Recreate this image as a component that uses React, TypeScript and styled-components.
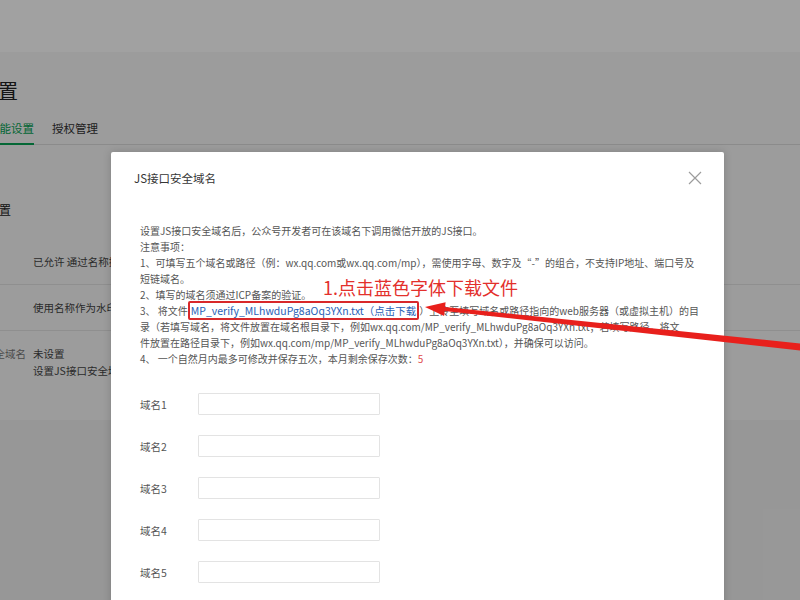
import styled, { createGlobalStyle } from "styled-components";

const GlobalStyle = createGlobalStyle`
  html, body {
    margin: 0;
    padding: 0;
  }
  body {
    font-family: "Noto Sans CJK SC", "Noto Sans", sans-serif;
    color: #333;
  }
`;

const Page = styled.div`
  position: relative;
  width: 800px;
  height: 600px;
  overflow: hidden;
  background: #f0f0f0;
`;

const Header = styled.div`
  height: 52px;
  background: #fff;
`;

const Main = styled.div`
  background: #f7f7f7;
  height: 368px;
`;

const Shifted = styled.div`
  margin-left: -82px;
`;

const PageTitle = styled.h1`
  margin: 0;
  padding-top: 25px;
  font-size: 20px;
  line-height: 28px;
  font-weight: 400;
  color: #222;
`;

const Tabs = styled.div`
  display: flex;
  gap: 18px;
  margin-top: 15px;
  padding-left: 6px;
  border-bottom: 1px solid #dcdcdc;
`;

const Tab = styled.div<{ $active?: boolean }>`
  font-size: 11.5px;
  line-height: 16px;
  padding-bottom: 7px;
  color: ${({ $active }) => ($active ? "#07a355" : "#333")};
  border-bottom: 2px solid
    ${({ $active }) => ($active ? "#07a355" : "transparent")};
  margin-bottom: -1px;
`;

const Card = styled.div`
  padding-left: 33px;
`;

const SectionTitle = styled.h2`
  margin: 57px 0 21px 12px;
  font-size: 12px;
  line-height: 16px;
  font-weight: 400;
  color: #222;
`;

const Row = styled.div<{ $last?: boolean }>`
  display: flex;
  padding: 14px 0;
  border-bottom: ${({ $last }) => ($last ? "none" : "1px solid #e2e2e2")};
  font-size: 10.5px;
  line-height: 17px;
  color: #444;
`;

const RowLabel = styled.div`
  width: 82px;
  flex-shrink: 0;
  color: #777;
`;

const RowValue = styled.div`
  white-space: nowrap;
`;

const Mask = styled.div`
  position: absolute;
  inset: 0;
  background: rgba(0, 0, 0, 0.37);
`;

const Dialog = styled.div`
  position: absolute;
  left: 111px;
  top: 152px;
  width: 613px;
  height: 470px;
  background: #fff;
  border-radius: 2px;
  box-shadow: 0 0 8px rgba(0, 0, 0, 0.18);
`;

const DialogHeader = styled.div`
  display: flex;
  align-items: center;
  justify-content: space-between;
  height: 52px;
  padding: 0 22px 0 23px;
`;

const DialogTitle = styled.h3`
  margin: 0;
  font-size: 11.5px;
  font-weight: 400;
  color: #353535;
`;

const CloseButton = styled.button`
  display: flex;
  padding: 0;
  border: none;
  background: none;
  cursor: pointer;
`;

const DialogBody = styled.div`
  padding: 19px 29px 0;
`;

const Notes = styled.div`
  font-size: 10px;
  line-height: 16px;
  color: #555;
  white-space: nowrap;
`;

const Note = styled.p`
  margin: 0;
`;

const FileLink = styled.a`
  font-size: 10.5px;
  color: #2761b6;
  text-decoration: none;
  border: 2px solid #d8282a;
  border-radius: 2px;
  padding: 0 1px;
`;

const Count = styled.span`
  color: #e0484a;
`;

const Form = styled.div`
  display: flex;
  flex-direction: column;
  gap: 20px;
  margin-top: 26px;
`;

const FieldRow = styled.label`
  display: flex;
  align-items: center;
`;

const FieldLabel = styled.span`
  width: 58px;
  font-size: 10.5px;
  color: #555;
`;

const FieldInput = styled.input`
  box-sizing: border-box;
  width: 182px;
  height: 22px;
  border: 1px solid #e3e3e3;
  border-radius: 1px;
  outline: none;
`;

const Callout = styled.div`
  position: absolute;
  left: 212px;
  top: 125px;
  font-size: 18px;
  line-height: 20px;
  color: #e3302c;
  white-space: nowrap;
`;

const ArrowLayer = styled.svg`
  position: absolute;
  left: 0;
  top: 0;
  pointer-events: none;
`;

const fields = ["域名1", "域名2", "域名3", "域名4", "域名5"];

export default function App() {
  return (
    <>
      <GlobalStyle />
      <Page>
        <Header />
        <Main>
          <Shifted>
            <PageTitle>公众号设置</PageTitle>
            <Tabs>
              <Tab>帐号详情</Tab>
              <Tab $active>功能设置</Tab>
              <Tab>授权管理</Tab>
            </Tabs>
            <Card>
              <SectionTitle>功能设置</SectionTitle>
              <Row>
                <RowLabel>隐私设置</RowLabel>
                <RowValue>已允许 通过名称搜索</RowValue>
              </Row>
              <Row>
                <RowLabel>图片水印</RowLabel>
                <RowValue>使用名称作为水印</RowValue>
              </Row>
              <Row $last>
                <RowLabel>JS接口安全域名</RowLabel>
                <RowValue>
                  未设置
                  <br />
                  设置JS接口安全域名
                </RowValue>
              </Row>
            </Card>
          </Shifted>
        </Main>

        <Mask />

        <Dialog role="dialog" aria-labelledby="js-domain-title">
          <DialogHeader>
            <DialogTitle id="js-domain-title">JS接口安全域名</DialogTitle>
            <CloseButton aria-label="关闭">
              <svg width="14" height="14" viewBox="0 0 14 14">
                <path
                  d="M1 1 L13 13 M13 1 L1 13"
                  stroke="#9c9c9c"
                  strokeWidth="1.2"
                  fill="none"
                />
              </svg>
            </CloseButton>
          </DialogHeader>
          <DialogBody>
            <Notes>
              <Note>
                设置JS接口安全域名后，公众号开发者可在该域名下调用微信开放的JS接口。
              </Note>
              <Note>注意事项：</Note>
              <Note>
                1、可填写五个域名或路径（例：wx.qq.com或wx.qq.com/mp），需使用字母、数字及“-”的组合，不支持IP地址、端口号及
                <br />
                短链域名。
              </Note>
              <Note>2、填写的域名须通过ICP备案的验证。</Note>
              <Note>
                3、 将文件
                <FileLink href="#">
                  MP_verify_MLhwduPg8aOq3YXn.txt（点击下载
                </FileLink>
                ）上传至填写域名或路径指向的web服务器（或虚拟主机）的目
                <br />
                录（若填写域名，将文件放置在域名根目录下，例如wx.qq.com/MP_verify_MLhwduPg8aOq3YXn.txt；若填写路径，将文
                <br />
                件放置在路径目录下，例如wx.qq.com/mp/MP_verify_MLhwduPg8aOq3YXn.txt），并确保可以访问。
              </Note>
              <Note>
                4、 一个自然月内最多可修改并保存五次，本月剩余保存次数：
                <Count>5</Count>
              </Note>
            </Notes>
            <Form>
              {fields.map((f) => (
                <FieldRow key={f}>
                  <FieldLabel>{f}</FieldLabel>
                  <FieldInput type="text" />
                </FieldRow>
              ))}
            </Form>
          </DialogBody>
          <Callout>1.点击蓝色字体下载文件</Callout>
        </Dialog>

        <ArrowLayer width="800" height="600" viewBox="0 0 800 600">
          <polygon
            points="425,307 445.6,302.2 445.1,307.1 805.4,344 804.6,351 444.7,311.1 444.1,316.1"
            fill="#e8201c"
          />
        </ArrowLayer>
      </Page>
    </>
  );
}
